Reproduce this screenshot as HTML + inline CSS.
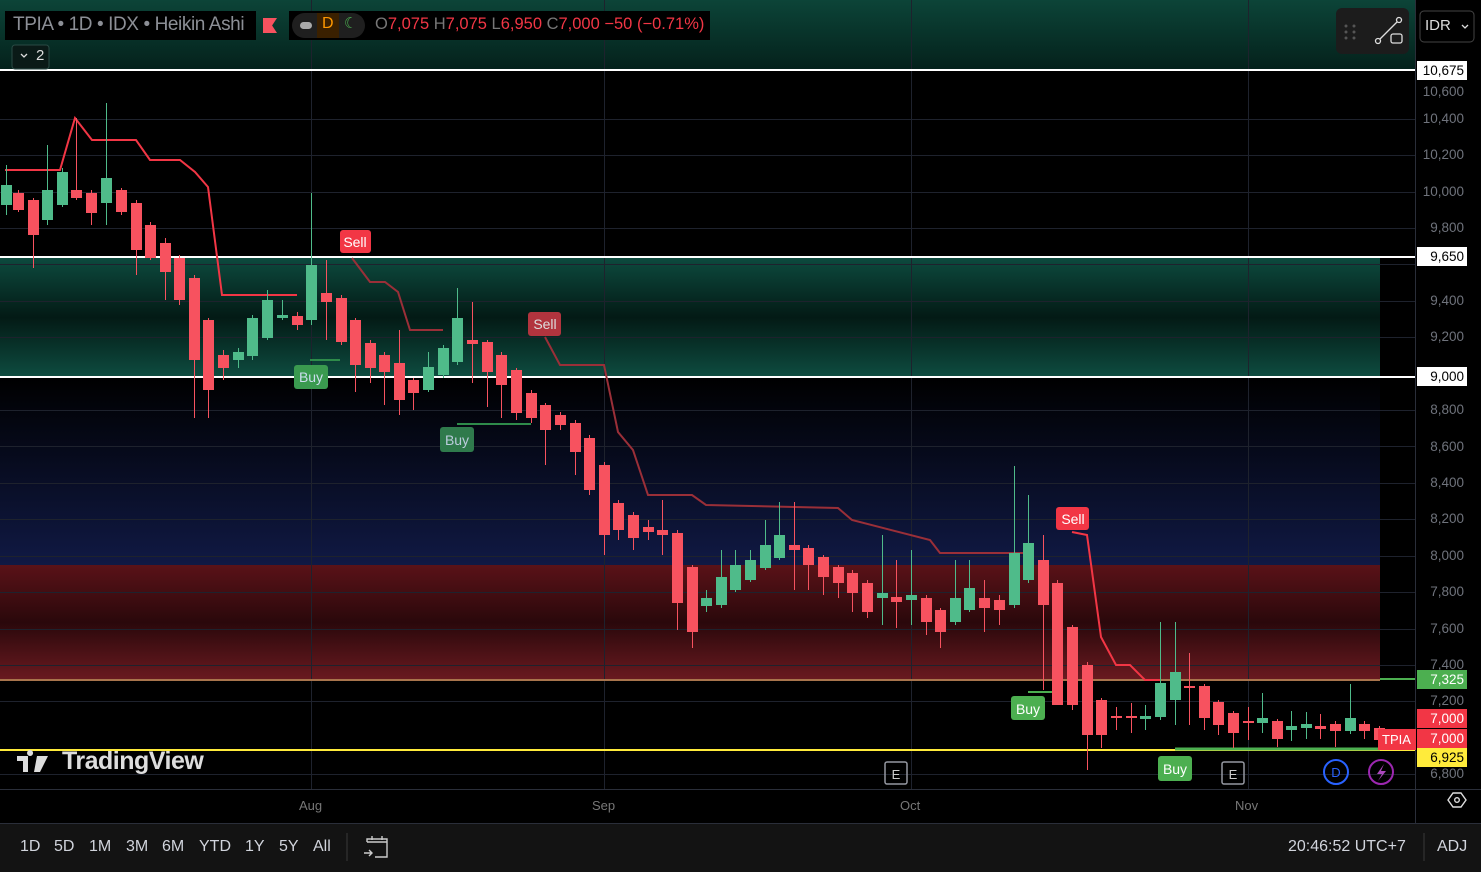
<!DOCTYPE html>
<html><head><meta charset="utf-8"><style>
*{margin:0;padding:0;box-sizing:border-box}
body{width:1481px;height:872px;background:#0f0f0f;overflow:hidden;font-family:"Liberation Sans",sans-serif;position:relative}
#wrap{position:absolute;left:0;top:0;width:1481px;height:872px}
.t{position:absolute;white-space:nowrap}
.pl{position:absolute;left:1417px;width:50px;height:19px;font-size:13.5px;line-height:19px;text-align:right;padding-right:3px;color:#6f737c}
.tb{position:absolute;top:838px;font-size:16px;color:#d1d4dc}
</style></head><body>
<div id="wrap">
<svg width="1481" height="872" style="position:absolute;left:0;top:0">
<defs>
<linearGradient id="gz" x1="0" y1="0" x2="0" y2="1">
<stop offset="0" stop-color="#0d4a3e"/><stop offset="0.5" stop-color="#031a15"/><stop offset="1" stop-color="#0e4c40"/></linearGradient>
<linearGradient id="gt" x1="0" y1="0" x2="0" y2="1">
<stop offset="0" stop-color="#0c4438"/><stop offset="1" stop-color="#04211b"/></linearGradient>
<linearGradient id="bz" x1="0" y1="0" x2="0" y2="1">
<stop offset="0" stop-color="#000000"/><stop offset="1" stop-color="#101944"/></linearGradient>
<linearGradient id="rz" x1="0" y1="0" x2="0" y2="1">
<stop offset="0" stop-color="#5a1218"/><stop offset="0.5" stop-color="#2a080b"/><stop offset="1" stop-color="#6a1a20"/></linearGradient>
</defs>
<rect x="0" y="0" width="1481" height="823" fill="#000"/>
<rect x="0" y="823" width="1481" height="49" fill="#131313"/>
<rect x="0" y="0" width="1415" height="70" fill="url(#gt)"/>
<rect x="0" y="258" width="1380" height="119" fill="url(#gz)"/>
<rect x="0" y="377" width="1380" height="188" fill="url(#bz)"/>
<rect x="0" y="565" width="1380" height="115" fill="url(#rz)"/>
<g id="grid" stroke="#1e222d" stroke-width="1"></g>
<line x1="1415.5" y1="0" x2="1415.5" y2="823" stroke="#2a2e39"/>
<line x1="0" y1="789.5" x2="1481" y2="789.5" stroke="#2a2e39"/>
<line x1="0" y1="823.5" x2="1481" y2="823.5" stroke="#2a2e39"/>
<g stroke-width="2" fill="none">
<line x1="0" y1="70" x2="1415" y2="70" stroke="#fff"/>
<line x1="0" y1="257" x2="1415" y2="257" stroke="#fff"/>
<line x1="0" y1="377" x2="1415" y2="377" stroke="#fff"/>
<line x1="0" y1="680" x2="1380" y2="680" stroke="#a8744c"/>
<line x1="1380" y1="679" x2="1415" y2="679" stroke="#4caf50"/>
<line x1="0" y1="750" x2="1415" y2="750" stroke="#ffeb3b"/>
<line x1="1175" y1="749" x2="1380" y2="749" stroke="#4caf50" stroke-width="3"/>
<line x1="310" y1="360" x2="340" y2="360" stroke="#2e8b4a"/>
<line x1="457" y1="424" x2="531" y2="424" stroke="#2e8b4a"/>
<line x1="1028" y1="692" x2="1057" y2="692" stroke="#4caf50"/>
<polyline stroke="#f23645" points="5,170 60,170 75,118 92,140 136,140 150,160 180,160 195,172 208,187 222,295 297,295"/>
<polyline stroke="#9a2f38" points="352,258 370,282 385,282 398,292 410,330 443,330"/>
<polyline stroke="#9a2f38" points="545,337 560,365 604,365 618,432 633,450 648,495 692,495 706,505 838,508 852,520 930,540 940,553 1028,553"/>
<polyline stroke="#f23645" points="1072,532 1087,535 1101,637 1116,665 1130,665 1145,680 1160,680"/>
</g>
<g id="c"></g>
<g font-family="Liberation Sans" font-size="14" text-anchor="middle">
<rect x="340" y="230" width="31" height="23" rx="3" fill="#f23645"/><text x="355" y="247" fill="#fff">Sell</text>
<rect x="528" y="312" width="33" height="24" rx="3" fill="#b2343e"/><text x="545" y="329" fill="#ddd">Sell</text>
<rect x="1056" y="507" width="33" height="23" rx="3" fill="#f23645"/><text x="1073" y="524" fill="#fff">Sell</text>
<rect x="294" y="365" width="34" height="24" rx="3" fill="#3a9a4f"/><text x="311" y="382" fill="#cde">Buy</text>
<rect x="440" y="427" width="34" height="25" rx="3" fill="#2f7a4c"/><text x="457" y="445" fill="#bcd">Buy</text>
<rect x="1011" y="696" width="34" height="24" rx="3" fill="#4caf50"/><text x="1028" y="714" fill="#fff">Buy</text>
<rect x="1158" y="756" width="34" height="25" rx="3" fill="#4caf50"/><text x="1175" y="774" fill="#fff">Buy</text>
</g>
<g fill="none" stroke="#9598a1" stroke-width="1.5">
<rect x="885" y="762" width="22" height="22" rx="2"/><rect x="1222" y="762" width="22" height="22" rx="2"/>
</g>
<text x="896" y="779" font-size="13" fill="#ccc" text-anchor="middle" font-family="Liberation Sans">E</text>
<text x="1233" y="779" font-size="13" fill="#ccc" text-anchor="middle" font-family="Liberation Sans">E</text>
<circle cx="1336" cy="772" r="12" fill="none" stroke="#2962ff" stroke-width="2"/>
<text x="1336" y="777" font-size="13" fill="#2962ff" text-anchor="middle" font-family="Liberation Sans">D</text>
<circle cx="1381" cy="772" r="12" fill="none" stroke="#9c27b0" stroke-width="2"/>
<path d="M1384 764 L1377 774 L1382 774 L1378 781 L1386 771 L1381 771 Z" fill="#ab47bc"/>
<rect x="1378" y="729" width="38" height="21" fill="#f23645"/>
<rect x="1336" y="8" width="73" height="46" rx="6" fill="#1c1c1c"/>
<g fill="#555"><circle cx="1346" cy="26" r="1.5"/><circle cx="1354" cy="26" r="1.5"/><circle cx="1346" cy="32" r="1.5"/><circle cx="1354" cy="32" r="1.5"/><circle cx="1346" cy="38" r="1.5"/><circle cx="1354" cy="38" r="1.5"/></g>
<g fill="none" stroke="#ddd" stroke-width="1.3"><circle cx="1378" cy="41" r="2.5"/><circle cx="1399" cy="20" r="2.5"/><line x1="1380" y1="39" x2="1397" y2="22"/><rect x="1391" y="34" width="11" height="9" rx="2"/></g>
<rect x="1420" y="11" width="54" height="31" rx="4" fill="#000" stroke="#444"/>
<path d="M1462 25 l3 3 l3 -3" stroke="#ddd" fill="none" stroke-width="1.3"/>
<path d="M1448 800 l5 -7 h8 l5 7 l-5 7 h-8 z" fill="none" stroke="#ddd" stroke-width="1.4"/><circle cx="1457" cy="800" r="2.3" fill="none" stroke="#ddd" stroke-width="1.4"/>
<line x1="347" y1="833" x2="347" y2="861" stroke="#3a3a3a"/>
<line x1="1424" y1="833" x2="1424" y2="861" stroke="#3a3a3a"/>
<g fill="none" stroke="#ccc" stroke-width="1.4"><path d="M367 842 v-3 h20 v18 h-12"/><line x1="367" y1="842" x2="387" y2="842"/><line x1="372" y1="836" x2="372" y2="840"/><line x1="382" y1="836" x2="382" y2="840"/><path d="M364 853 h8 m-3 -3 l3 3 l-3 3"/></g>
<path d="M17 756 h11 v16 h-5 v-11 h-6z M30 756 a3 3 0 1 1 0.1 0z M37 756 h11 l-8 16 h-6 z" fill="#ddd"/>
<rect x="12" y="45" width="37" height="24" rx="3" fill="#0a1a17" stroke="#2a4a44"/>
<path d="M21 54 l3 3 l3 -3" stroke="#ddd" fill="none" stroke-width="1.3"/>
</svg>

<div class="t" style="left:5px;top:11px;height:29px;width:251px;background:#000"></div>
<div class="t" style="left:13px;top:14px;font-size:19px;color:#8c8f96;letter-spacing:-0.4px">TPIA • 1D • IDX • Heikin Ashi</div>
<div class="t" style="left:263px;top:18px;width:14px;height:15px;background:#f7525f;clip-path:polygon(0 0,100% 0,65% 50%,100% 100%,0 100%)"></div>
<div class="t" style="left:289px;top:11px;height:29px;width:421px;background:#000"></div>
<div class="t" style="left:292px;top:13px;width:73px;height:25px;border-radius:13px;background:#1f1f1f"></div>
<div class="t" style="left:300px;top:22px;width:12px;height:7px;border-radius:4px;background:#aaa"></div>
<div class="t" style="left:317px;top:13px;width:22px;height:25px;background:#3a2000"></div>
<div class="t" style="left:322px;top:15px;font-size:16px;color:#ff9800">D</div>
<div class="t" style="left:344px;top:14px;font-size:15px;color:#4caf50">☾</div>
<div class="t" style="left:375px;top:15px;font-size:16.5px;color:#f23645"><span style="color:#777">O</span>7,075 <span style="color:#777">H</span>7,075 <span style="color:#777">L</span>6,950 <span style="color:#777">C</span>7,000 −50 (−0.71%)</div>
<div class="t" style="left:36px;top:47px;font-size:15px;color:#ddd">2</div>
<div class="t" style="left:1425px;top:17px;font-size:15px;color:#ddd">IDR</div>
<div class="t" style="left:62px;top:747px;font-size:25px;font-weight:bold;color:#ddd;letter-spacing:-0.5px">TradingView</div>

<div class="pl" style="top:82px">10,600</div>
<div class="pl" style="top:109px">10,400</div>
<div class="pl" style="top:145px">10,200</div>
<div class="pl" style="top:182px">10,000</div>
<div class="pl" style="top:218px">9,800</div>
<div class="pl" style="top:291px">9,400</div>
<div class="pl" style="top:327px">9,200</div>
<div class="pl" style="top:400px">8,800</div>
<div class="pl" style="top:437px">8,600</div>
<div class="pl" style="top:473px">8,400</div>
<div class="pl" style="top:509px">8,200</div>
<div class="pl" style="top:546px">8,000</div>
<div class="pl" style="top:582px">7,800</div>
<div class="pl" style="top:619px">7,600</div>
<div class="pl" style="top:655px">7,400</div>
<div class="pl" style="top:691px">7,200</div>
<div class="pl" style="top:764px">6,800</div>
<div class="pl" style="top:61px;background:#fff;color:#000">10,675</div>
<div class="pl" style="top:247px;background:#fff;color:#000">9,650</div>
<div class="pl" style="top:367px;background:#fff;color:#000">9,000</div>
<div class="pl" style="top:670px;background:#4caf50;color:#fff">7,325</div>
<div class="pl" style="top:709px;background:#f23645;color:#fff">7,000</div>
<div class="pl" style="top:729px;background:#f23645;color:#fff">7,000</div>
<div class="pl" style="top:748px;background:#ffeb3b;color:#000">6,925</div>
<div class="t" style="left:1382px;top:732px;font-size:13px;color:#fff">TPIA</div>

<div class="t" style="left:299px;top:798px;font-size:13px;color:#777">Aug</div>
<div class="t" style="left:592px;top:798px;font-size:13px;color:#777">Sep</div>
<div class="t" style="left:900px;top:798px;font-size:13px;color:#777">Oct</div>
<div class="t" style="left:1235px;top:798px;font-size:13px;color:#777">Nov</div>

<div class="tb" style="left:20px">1D</div><div class="tb" style="left:54px">5D</div><div class="tb" style="left:89px">1M</div><div class="tb" style="left:126px">3M</div><div class="tb" style="left:162px">6M</div><div class="tb" style="left:199px">YTD</div><div class="tb" style="left:245px">1Y</div><div class="tb" style="left:279px">5Y</div><div class="tb" style="left:313px">All</div>
<div class="tb" style="left:1288px">20:46:52 UTC+7</div><div class="tb" style="left:1437px">ADJ</div>
</div>
<script>
var g=document.getElementById('grid'),s='';
[119,155,192,228,264,301,337,410,446,483,519,556,592,629,665,701,774].forEach(function(y){s+='<line x1="0" y1="'+(y+.5)+'" x2="1415" y2="'+(y+.5)+'"/>'});
[311,604,911,1248].forEach(function(x){s+='<line x1="'+(x+.5)+'" y1="0" x2="'+(x+.5)+'" y2="789"/>'});
g.innerHTML=s;
var C=[[6,205,185,165,215],[18,193,210,190,212],[33,200,235,198,268],[47,220,190,145,225],[62,205,172,168,207],[76,190,198,118,200],[91,193,213,190,225],[106,203,178,103,225],[121,190,212,188,215],[136,203,250,200,275],[150,225,258,222,260],[165,243,272,238,300],[179,258,300,255,305],[194,278,360,275,418],[208,320,390,318,418],[223,355,368,350,380],[238,360,352,348,368],[252,356,318,315,360],[267,338,300,290,340],[282,318,315,300,320],[297,316,325,312,330],[311,320,265,193,325],[326,293,302,260,340],[341,298,342,295,345],[355,320,365,318,392],[370,343,368,340,383],[384,355,372,352,405],[399,363,400,330,415],[413,380,393,378,410],[428,390,367,352,392],[443,375,348,345,378],[457,362,318,288,365],[472,340,344,302,383],[487,342,372,340,407],[501,355,385,352,418],[516,370,413,368,420],[531,393,418,390,423],[545,405,430,403,465],[560,415,425,412,430],[575,423,452,420,475],[589,438,490,435,495],[604,465,535,462,555],[618,503,530,500,540],[633,515,538,512,550],[648,527,532,520,540],[662,530,535,500,555],[677,533,603,530,630],[692,567,632,565,648],[706,606,598,590,612],[721,605,577,550,608],[735,590,565,550,592],[750,580,560,550,582],[765,568,545,520,570],[779,558,535,502,560],[794,545,550,502,590],[808,548,565,545,590],[823,557,577,555,595],[838,567,583,565,598],[852,573,593,570,612],[867,583,612,580,618],[882,598,593,535,625],[896,597,602,560,628],[911,600,595,550,625],[926,598,622,595,635],[940,610,632,608,648],[955,622,598,560,625],[969,610,588,560,612],[984,598,608,580,632],[999,600,610,595,625],[1014,605,553,466,608],[1028,580,543,495,583],[1043,560,605,535,690],[1057,583,705,580,700],[1072,627,705,625,710],[1087,665,735,662,770],[1101,700,735,698,748],[1116,716,718,707,730],[1131,716,718,703,733],[1145,719,716,705,730],[1160,717,683,622,720],[1175,700,672,622,725],[1189,686,688,653,725],[1204,686,718,684,730],[1218,702,725,700,735],[1233,713,733,711,748],[1248,721,723,707,740],[1262,723,718,693,733],[1277,721,739,719,747],[1291,730,726,711,741],[1306,728,724,712,739],[1320,726,729,714,739],[1335,724,731,721,747],[1350,731,718,684,734],[1364,724,731,721,739],[1379,728,740,726,742]];
var h='';C.forEach(function(c){var col=c[2]<c[1]?'#4fbb8a':'#f7525f';var t=Math.min(c[1],c[2]),b=Math.max(c[1],c[2]);if(b-t<2)b=t+2;
h+='<line x1="'+(c[0]+.5)+'" y1="'+c[3]+'" x2="'+(c[0]+.5)+'" y2="'+c[4]+'" stroke="'+col+'"/><rect x="'+(c[0]-5)+'" y="'+t+'" width="11" height="'+(b-t)+'" fill="'+col+'"/>';});
document.getElementById('c').innerHTML=h;
</script>
</body></html>
